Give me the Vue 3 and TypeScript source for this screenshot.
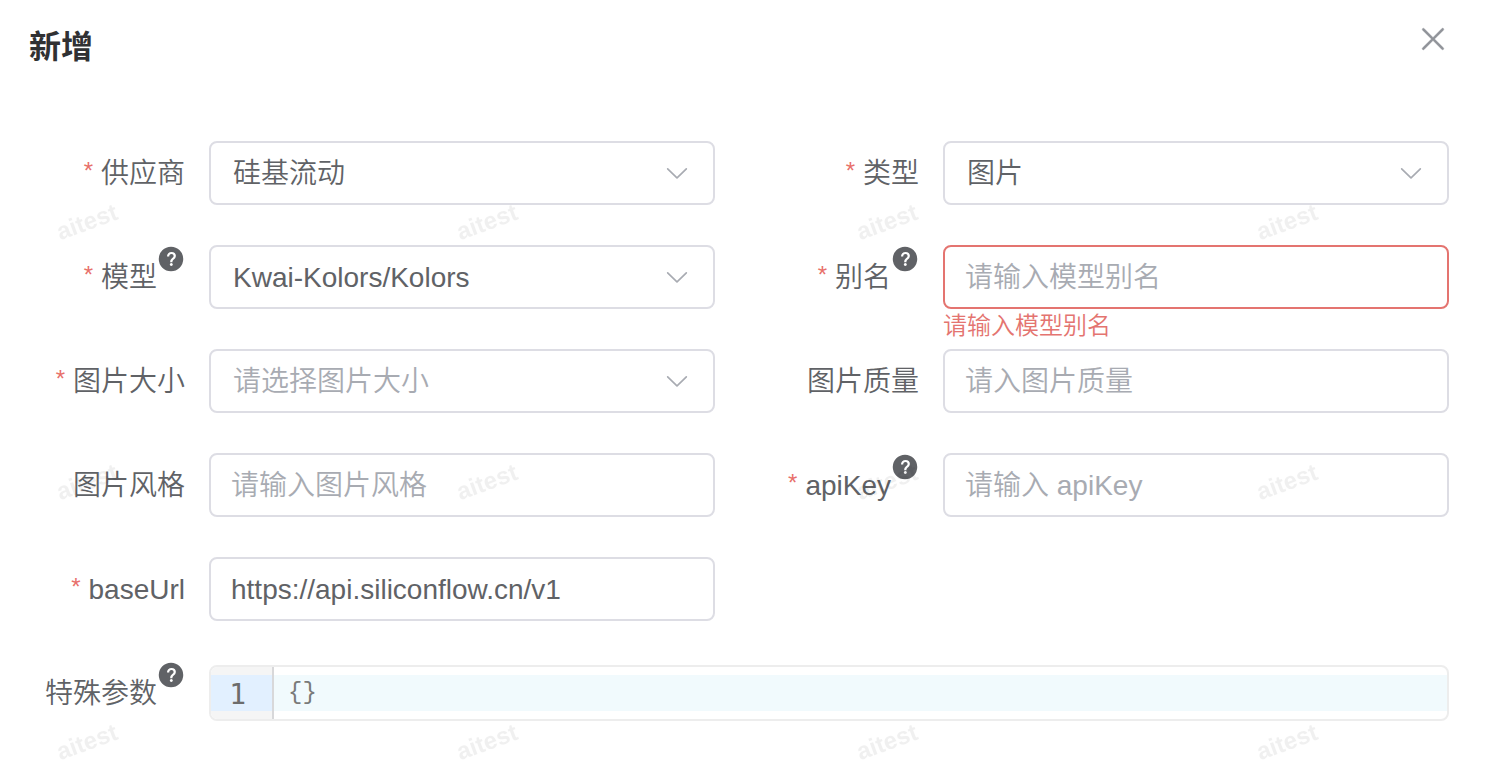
<script setup lang="ts">
import { reactive } from 'vue'

type Kind = 'select' | 'input'

interface Field {
  key: string
  label: string
  kind: Kind
  required?: boolean
  help?: boolean
  placeholder?: string
  options?: string[]
  error?: string
}

const fields: Field[] = [
  { key: 'provider', label: '供应商', kind: 'select', required: true, options: ['硅基流动'] },
  { key: 'type', label: '类型', kind: 'select', required: true, options: ['图片'] },
  { key: 'model', label: '模型', kind: 'select', required: true, help: true, options: ['Kwai-Kolors/Kolors'] },
  { key: 'alias', label: '别名', kind: 'input', required: true, help: true, placeholder: '请输入模型别名', error: '请输入模型别名' },
  { key: 'size', label: '图片大小', kind: 'select', required: true, placeholder: '请选择图片大小', options: [] },
  { key: 'quality', label: '图片质量', kind: 'input', placeholder: '请入图片质量' },
  { key: 'style', label: '图片风格', kind: 'input', placeholder: '请输入图片风格' },
  { key: 'apiKey', label: 'apiKey', kind: 'input', required: true, help: true, placeholder: '请输入 apiKey' },
  { key: 'baseUrl', label: 'baseUrl', kind: 'input', required: true },
]

const form = reactive<Record<string, string>>({
  provider: '硅基流动',
  type: '图片',
  model: 'Kwai-Kolors/Kolors',
  alias: '',
  size: '',
  quality: '',
  style: '',
  apiKey: '',
  baseUrl: 'https://api.siliconflow.cn/v1',
  params: '{}',
})

const helpPath =
  'M512 64a448 448 0 1 1 0 896 448 448 0 0 1 0-896m23.744 191.488c-52.096 0-92.928 14.784-123.2 44.352-30.976 29.568-45.76 70.4-45.76 122.496h80.256c0-29.568 5.632-52.8 17.6-68.48 13.376-19.712 35.2-28.864 66.176-28.864 23.936 0 42.944 6.336 56.32 19.712 12.672 13.376 19.712 31.68 19.712 54.912 0 17.6-6.336 34.496-19.008 49.984l-8.448 9.856c-45.76 40.832-73.216 70.4-82.368 89.408-9.856 19.008-14.08 42.24-14.08 68.992v9.856h80.96v-9.856c0-16.896 3.52-31.68 10.56-45.76 6.336-12.672 15.488-24.64 28.16-35.2 33.792-29.568 54.208-48.576 60.544-55.616 16.896-22.528 26.048-51.392 26.048-86.592 0-42.944-14.08-76.736-42.24-101.376-28.16-25.344-65.472-37.312-111.232-37.312zm-12.672 406.208a54.272 54.272 0 0 0-38.72 14.784 49.408 49.408 0 0 0-15.488 38.016c0 15.488 4.928 28.16 15.488 38.016A54.848 54.848 0 0 0 523.072 768c15.488 0 28.16-4.928 38.72-14.784a51.52 51.52 0 0 0 16.192-38.72 51.968 51.968 0 0 0-15.488-38.016 55.936 55.936 0 0 0-39.424-14.784z'
</script>

<template>
  <main class="dialog">
    <header class="header">
      <h1 class="title">新增</h1>
      <button class="close" type="button" aria-label="关闭">
        <svg viewBox="0 0 1024 1024" width="36" height="36" fill="currentColor" stroke="currentColor" stroke-width="10">
          <path d="M764.288 214.592 512 466.88 259.712 214.592a31.936 31.936 0 0 0-45.12 45.12L466.752 512 214.528 764.224a31.936 31.936 0 1 0 45.12 45.184L512 557.184l252.288 252.288a31.936 31.936 0 0 0 45.12-45.12L557.12 512.064l252.288-252.352a31.936 31.936 0 1 0-45.12-45.184z" />
        </svg>
      </button>
    </header>

    <form class="form" @submit.prevent>
      <div v-for="f in fields" :key="f.key" class="item">
        <div class="label">
          <span v-if="f.required" class="star" aria-hidden="true">*</span>
          <label class="name" :for="f.key">{{ f.label }}</label>
          <button v-if="f.help" class="help" type="button" aria-label="帮助">
            <svg viewBox="0 0 1024 1024" width="28" height="28" fill="currentColor"><path :d="helpPath" /></svg>
          </button>
        </div>
        <div class="field">
          <template v-if="f.kind === 'select'">
            <select :id="f.key" v-model="form[f.key]" class="control select" :class="{ empty: !form[f.key] }">
              <option v-if="f.placeholder" value="" disabled hidden>{{ f.placeholder }}</option>
              <option v-for="o in f.options" :key="o" :value="o">{{ o }}</option>
            </select>
            <svg class="arrow" viewBox="0 0 1024 1024" width="28" height="28" fill="currentColor" aria-hidden="true">
              <path d="M831.872 340.864 512 652.672 192.128 340.864a30.592 30.592 0 0 0-42.752 0 29.12 29.12 0 0 0 0 41.6L489.664 714.24a32 32 0 0 0 44.672 0l340.288-331.712a29.12 29.12 0 0 0 0-41.728 30.592 30.592 0 0 0-42.752 0z" />
            </svg>
          </template>
          <input
            v-else
            :id="f.key"
            v-model="form[f.key]"
            class="control"
            :class="{ invalid: f.error }"
            type="text"
            autocomplete="off"
            :placeholder="f.placeholder"
          />
          <p v-if="f.error" class="error">{{ f.error }}</p>
        </div>
      </div>

      <div class="item wide">
        <div class="label">
          <label class="name" for="params">特殊参数</label>
          <button class="help" type="button" aria-label="帮助">
            <svg viewBox="0 0 1024 1024" width="28" height="28" fill="currentColor"><path :d="helpPath" /></svg>
          </button>
        </div>
        <div class="field editor">
          <div class="gutter"><span class="line-no">1</span></div>
          <div class="code">
            <textarea id="params" v-model="form.params" class="code-input" rows="1" spellcheck="false"></textarea>
          </div>
        </div>
      </div>
    </form>

    <svg class="watermark" width="100%" height="100%" aria-hidden="true">
      <defs>
        <pattern id="mark" x="0" y="92" width="400" height="260" patternUnits="userSpaceOnUse">
          <text class="mark-text" x="87" y="138" text-anchor="middle" transform="rotate(-20 87 130)">aitest</text>
        </pattern>
      </defs>
      <rect width="100%" height="100%" fill="url(#mark)" />
    </svg>
  </main>
</template>

<style>
body {
  margin: 0;
  background: #fff;
}
</style>

<style scoped>
.dialog {
  position: relative;
  box-sizing: border-box;
  min-height: 100vh;
  overflow: hidden;
  padding: 21px 41px 40px 21px;
  background: #fff;
  color: #606266;
  font-family: "Liberation Sans", "Noto Sans CJK SC", sans-serif;
  font-size: 28px;
  font-weight: 350;
  line-height: 32px;
}

.header {
  display: flex;
  align-items: flex-start;
  justify-content: space-between;
  height: 120px;
  padding-left: 8px;
}

.title {
  margin: 0;
  color: #303133;
  font-size: 32px;
  font-weight: 700;
  line-height: 52px;
}

.close,
.help {
  display: block;
  padding: 0;
  border: 0;
  background: none;
  cursor: pointer;
}

.close {
  width: 36px;
  height: 36px;
  margin-right: -2px;
  color: #909399;
}

.close svg,
.help svg {
  display: block;
}

.form {
  display: grid;
  grid-template-columns: repeat(2, minmax(0, 1fr));
  gap: 40px;
}

.item {
  display: flex;
  align-items: center;
}

.wide {
  grid-column: 1 / -1;
}

.label {
  box-sizing: border-box;
  flex: 0 0 188px;
  display: flex;
  align-items: center;
  justify-content: flex-end;
  height: 64px;
  padding-right: 24px;
  white-space: nowrap;
}

.name {
  padding-top: 2px;
}

.star {
  margin-right: 8px;
  padding-bottom: 4px;
  color: #e8706b;
  font-size: 24px;
}

.help {
  align-self: flex-start;
  color: #606266;
}

.field {
  position: relative;
  flex: 1;
  min-width: 0;
}

.control {
  display: block;
  box-sizing: border-box;
  width: 100%;
  height: 64px;
  margin: 0;
  padding: 2px 20px 0;
  border: 2px solid #dddde4;
  border-radius: 8px;
  outline: none;
  background: #fff;
  color: #606266;
  font: inherit;
}

.control::placeholder {
  color: #a8abb2;
  opacity: 1;
}

.select {
  appearance: none;
  padding: 2px 64px 0 22px;
}

.select.empty {
  color: #a8abb2;
}

.invalid {
  border-color: #e47470;
}

.arrow {
  position: absolute;
  top: 18px;
  right: 24px;
  color: #a8abb2;
  pointer-events: none;
}

.error {
  position: absolute;
  top: 100%;
  left: 0;
  margin: 3px 0 0;
  color: #e47470;
  font-size: 24px;
  line-height: 28px;
}

.editor {
  display: flex;
  box-sizing: border-box;
  border: 2px solid #ededed;
  border-radius: 8px;
  overflow: hidden;
  font-family: "DejaVu Sans Mono", monospace;
}

.gutter {
  box-sizing: border-box;
  width: 63px;
  padding: 8px 0;
  border-right: 2px solid #d8d8da;
  background: #f5f5f5;
}

.line-no {
  display: block;
  box-sizing: border-box;
  height: 36px;
  padding: 2px 26px 0 0;
  background: #e2f0ff;
  color: #6c6c6c;
  line-height: 36px;
  text-align: right;
}

.code {
  flex: 1;
  padding: 8px 0;
}

.code-input {
  display: block;
  box-sizing: border-box;
  width: 100%;
  height: 36px;
  padding: 0 14px;
  border: 0;
  outline: none;
  resize: none;
  overflow: hidden;
  background: #f1fafd;
  color: #7a7a7a;
  font-family: "Liberation Mono", monospace;
  font-size: 24px;
  line-height: 36px;
}

.watermark {
  position: absolute;
  inset: 0;
  pointer-events: none;
}

.mark-text {
  fill: #000;
  fill-opacity: 0.06;
  font-family: "Liberation Sans", sans-serif;
  font-size: 24px;
  font-weight: 700;
}
</style>
